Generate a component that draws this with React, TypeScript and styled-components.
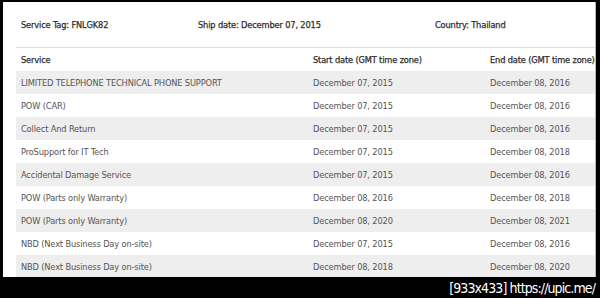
import styled, { createGlobalStyle } from "styled-components";

const GlobalStyle = createGlobalStyle`
  html, body {
    margin: 0;
    padding: 0;
    background: #000000;
  }
`;

type Row = { service: string; start: string; end: string };

const ROWS: Row[] = [
  { service: "LIMITED TELEPHONE TECHNICAL PHONE SUPPORT", start: "December 07, 2015", end: "December 08, 2016" },
  { service: "POW (CAR)", start: "December 07, 2015", end: "December 08, 2016" },
  { service: "Collect And Return", start: "December 07, 2015", end: "December 08, 2016" },
  { service: "ProSupport for IT Tech", start: "December 07, 2015", end: "December 08, 2018" },
  { service: "Accidental Damage Service", start: "December 07, 2015", end: "December 08, 2016" },
  { service: "POW (Parts only Warranty)", start: "December 08, 2016", end: "December 08, 2018" },
  { service: "POW (Parts only Warranty)", start: "December 08, 2020", end: "December 08, 2021" },
  { service: "NBD (Next Business Day on-site)", start: "December 07, 2015", end: "December 08, 2016" },
  { service: "NBD (Next Business Day on-site)", start: "December 08, 2018", end: "December 08, 2020" },
];

export default function App() {
  return (
    <Screen>
      <GlobalStyle />
      <Panel>
        <InfoBar>
          <InfoItem>Service Tag: FNLGK82</InfoItem>
          <InfoItem>Ship date: December 07, 2015</InfoItem>
          <InfoItem>Country: Thailand</InfoItem>
        </InfoBar>
        <Table>
          <HeadRow>
            <HeadCell>Service</HeadCell>
            <HeadCell>Start date (GMT time zone)</HeadCell>
            <HeadCell>End date (GMT time zone)</HeadCell>
          </HeadRow>
          {ROWS.map((row, i) => (
            <BodyRow key={i} $striped={i % 2 === 0}>
              <Cell>{row.service}</Cell>
              <Cell>{row.start}</Cell>
              <Cell>{row.end}</Cell>
            </BodyRow>
          ))}
        </Table>
      </Panel>
      <Footer>[933x433] https://upic.me/</Footer>
    </Screen>
  );
}

const Screen = styled.div`
  width: 600px;
  height: 298px;
  box-sizing: border-box;
  padding: 2px 4px 0 3px;
  background: #000000;
  display: flex;
  flex-direction: column;
  overflow: hidden;
`;

const Panel = styled.div`
  height: 275px;
  flex-shrink: 0;
  box-sizing: border-box;
  background: #ffffff;
  border-right: 1px solid #b8b8b8;
  overflow: hidden;
  font-family: "DejaVu Sans Condensed", "DejaVu Sans", sans-serif;
  font-size: 9.2px;
  letter-spacing: -0.15px;
`;

const InfoBar = styled.div`
  display: grid;
  grid-template-columns: 177px 237px auto;
  align-items: center;
  height: 45px;
  padding-left: 18px;
`;

const InfoItem = styled.div`
  color: #2e2e2e;
  -webkit-text-stroke: 0.25px #2e2e2e;
  white-space: nowrap;
`;

const Table = styled.div`
  margin-left: 13px;
  width: 620px;
  border-top: 1px solid #dddddd;
`;

const RowGrid = styled.div`
  display: grid;
  grid-template-columns: 292px 177px auto;
  align-items: center;
`;

const HeadRow = styled(RowGrid)`
  height: 23px;
`;

const BodyRow = styled(RowGrid)<{ $striped: boolean }>`
  height: 23px;
  background: ${(p) => (p.$striped ? "#eeeeee" : "#ffffff")};
`;

const HeadCell = styled.div`
  padding-left: 5px;
  color: #2e2e2e;
  -webkit-text-stroke: 0.25px #2e2e2e;
  white-space: nowrap;
`;

const Cell = styled.div`
  padding-left: 5px;
  color: #555555;
  white-space: nowrap;
`;

const Footer = styled.div`
  flex: 1;
  display: flex;
  align-items: center;
  justify-content: flex-end;
  padding-right: 1px;
  color: #ffffff;
  font-family: "DejaVu Sans Condensed", "Liberation Sans", sans-serif;
  font-size: 14px;
  letter-spacing: -0.9px;
`;
